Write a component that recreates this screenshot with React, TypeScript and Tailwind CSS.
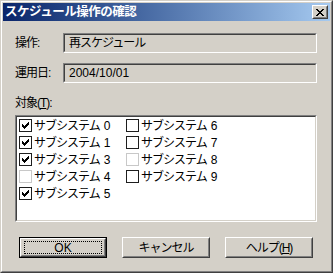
import React from "react";

const FONT = { fontFamily: '"Liberation Sans", "Noto Sans CJK JP", sans-serif' };

type Item = { num: number; checked: boolean; disabled?: boolean };

const col1: Item[] = [
  { num: 0, checked: true },
  { num: 1, checked: true },
  { num: 3, checked: true },
  { num: 4, checked: false, disabled: true },
  { num: 5, checked: true },
];

const col2: Item[] = [
  { num: 6, checked: false },
  { num: 7, checked: false },
  { num: 8, checked: false, disabled: true },
  { num: 9, checked: false },
];

function PixelArt({ rows }: { rows: string[] }) {
  const w = rows[0].length;
  const h = rows.length;
  return (
    <svg width={w} height={h} viewBox={`0 0 ${w} ${h}`} shapeRendering="crispEdges">
      {rows.flatMap((r, y) =>
        r.split("").map((c, x) =>
          c === "#" ? <rect key={`${x}-${y}`} x={x} y={y} width="1" height="1" fill="#000" /> : null,
        ),
      )}
    </svg>
  );
}

// classic 7x7 check
const CHECK = [
  "......#",
  ".....##",
  "#...###",
  "##.###.",
  "#####..",
  ".###...",
  "..#....",
];

const CLOSE = [
  "##....##",
  ".##..##.",
  "..####..",
  "...##...",
  "..####..",
  ".##..##.",
  "##....##",
];

function CheckRow({ item }: { item: Item }) {
  return (
    <div className="h-[17px] flex items-center gap-[2px]">
      <div
        className={`w-[13px] h-[13px] bg-white border flex items-center justify-center shrink-0 ${
          item.disabled ? "border-[#c8c8c8]" : "border-[#1e1e1e]"
        }`}
      >
        {item.checked && <PixelArt rows={CHECK} />}
      </div>
      <span className="text-[12px] leading-none text-black whitespace-nowrap">
        <span className="tracking-[-1px]">サブシステム</span>
        <span className="ml-[4px]">{item.num}</span>
      </span>
    </div>
  );
}

function Sunken({ children, className }: { children?: React.ReactNode; className?: string }) {
  return (
    <div className={`border border-t-[#808080] border-l-[#808080] border-b-white border-r-white ${className ?? ""}`}>
      <div className="h-full border border-t-[#404040] border-l-[#404040] border-b-[#d4d0c8] border-r-[#d4d0c8]">
        {children}
      </div>
    </div>
  );
}

function Button({ children, isDefault }: { children: React.ReactNode; isDefault?: boolean }) {
  return (
    <div className={`w-[88px] h-[21px] text-[12px] leading-none text-black ${isDefault ? "border border-black" : ""}`}>
      <div className="h-full border border-t-white border-l-white border-b-[#404040] border-r-[#404040]">
        <div className="h-full border border-t-[#d4d0c8] border-l-[#d4d0c8] border-b-[#808080] border-r-[#808080] flex items-center justify-center">
          {isDefault ? (
            <div className="w-[78px] h-[13px] border border-dotted border-black flex items-center justify-center">
              {children}
            </div>
          ) : (
            children
          )}
        </div>
      </div>
    </div>
  );
}

export default function App() {
  return (
    <div style={FONT} className="w-[333px] h-[273px] bg-[#d4d0c8] border border-t-[#d4d0c8] border-l-[#d4d0c8] border-b-[#404040] border-r-[#404040]">
      <div className="h-full border border-t-white border-l-white border-b-[#808080] border-r-[#808080] p-px flex flex-col">
        {/* title bar */}
        <div className="h-[18px] bg-gradient-to-r from-[#0a246a] to-[#a6caf0] flex items-center pl-[2px] pr-[2px]">
          <span className="flex-1 text-white font-bold text-[12.5px] leading-none tracking-[-0.5px] whitespace-nowrap">
            スケジュール操作の確認
          </span>
          <div className="w-[16px] h-[14px] bg-[#d4d0c8] border border-t-white border-l-white border-b-[#404040] border-r-[#404040]">
            <div className="h-full border border-t-[#d4d0c8] border-l-[#d4d0c8] border-b-[#808080] border-r-[#808080] flex items-center justify-center">
              <PixelArt rows={CLOSE} />
            </div>
          </div>
        </div>

        {/* body */}
        <div className="pl-[12px] pr-[13px] pt-[12px] flex flex-col">
          <div className="flex items-center h-[20px]">
            <span className="w-[48px] text-[12px] leading-none tracking-[-1px] text-black">操作:</span>
            <Sunken className="flex-1 h-[20px]">
              <div className="h-full flex items-center pl-[4px] text-[12px] leading-none tracking-[-1px] text-black">
                再スケジュール
              </div>
            </Sunken>
          </div>
          <div className="flex items-center h-[20px] mt-[10px]">
            <span className="w-[48px] text-[12px] leading-none tracking-[-1px] text-black">運用日:</span>
            <Sunken className="flex-1 h-[20px]">
              <div className="h-full flex items-center pl-[4px] text-[12px] leading-none text-black">
                2004/10/01
              </div>
            </Sunken>
          </div>

          <div className="mt-[12px] h-[16px] flex items-center text-[12px] leading-none tracking-[-1px] text-black">
            対象(<span className="underline">T</span>):
          </div>

          <Sunken className="mt-[4px] h-[107px]">
            <div className="h-full bg-white pl-[2px] flex">
              <div className="w-[107px] flex flex-col">
                {col1.map((it) => (
                  <CheckRow key={it.num} item={it} />
                ))}
              </div>
              <div className="flex flex-col">
                {col2.map((it) => (
                  <CheckRow key={it.num} item={it} />
                ))}
              </div>
            </div>
          </Sunken>

          <div className="mt-[15px] pl-[4px] flex gap-[15px]">
            <Button isDefault>OK</Button>
            <Button>
              <span className="tracking-[-1px]">キャンセル</span>
            </Button>
            <Button>
              <span className="tracking-[-1px]">
                ヘルプ(<span className="underline">H</span>)
              </span>
            </Button>
          </div>
        </div>
      </div>
    </div>
  );
}
